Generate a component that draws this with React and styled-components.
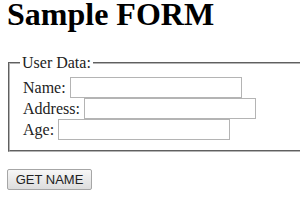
import styled, { createGlobalStyle } from "styled-components";

const GlobalStyle = createGlobalStyle`
  html, body {
    margin: 0;
    padding: 0;
    overflow: hidden;
    background: #fff;
  }
  body {
    font-family: "Liberation Serif", "Times New Roman", serif;
    color: #111;
  }
`;

const Page = styled.div`
  width: 300px;
  height: 210px;
  overflow: hidden;
`;

const Heading = styled.h1`
  margin: 0 0 0 7px;
  font-size: 32px;
  line-height: 28px;
  font-weight: bold;
  color: #000;
  white-space: nowrap;
`;

const Fieldset = styled.fieldset`
  margin: 26px 0 0 8px;
  width: 320px;
  padding: 5px 13px 10px;
  border: 2px groove #b4b4b4;
`;

const Legend = styled.legend`
  margin-left: -3px;
  padding: 0 2px;
  font-size: 16px;
  line-height: 18px;
  color: #222;
`;

const Rows = styled.div`
  display: flex;
  flex-direction: column;
`;

const Row = styled.div`
  display: flex;
  align-items: center;
  gap: 4px;
  height: 21px;
`;

const Label = styled.label`
  font-size: 16px;
  line-height: 21px;
  color: #222;
`;

const Input = styled.input`
  box-sizing: border-box;
  width: 172px;
  height: 21px;
  margin: 0;
  padding: 1px 2px;
  border: 1px solid #b4b4b4;
  background: #fff;
  font-family: "Liberation Sans", Arial, sans-serif;
  font-size: 13px;
`;

const Button = styled.button`
  display: block;
  box-sizing: border-box;
  margin: 17px 0 0 7px;
  width: 85px;
  height: 21px;
  padding: 0;
  border: 1px solid #a6a6a6;
  border-radius: 2px;
  background: linear-gradient(#f7f7f7, #dddddd);
  font-family: "Liberation Sans", Arial, sans-serif;
  font-size: 13px;
  color: #222;
  cursor: pointer;
`;

const fields = ["Name:", "Address:", "Age:"];

export default function App() {
  return (
    <Page>
      <GlobalStyle />
      <Heading>Sample FORM</Heading>
      <Fieldset>
        <Legend>User Data:</Legend>
        <Rows>
          {fields.map((f) => (
            <Row key={f}>
              <Label>{f}</Label>
              <Input type="text" />
            </Row>
          ))}
        </Rows>
      </Fieldset>
      <Button type="button">GET NAME</Button>
    </Page>
  );
}
